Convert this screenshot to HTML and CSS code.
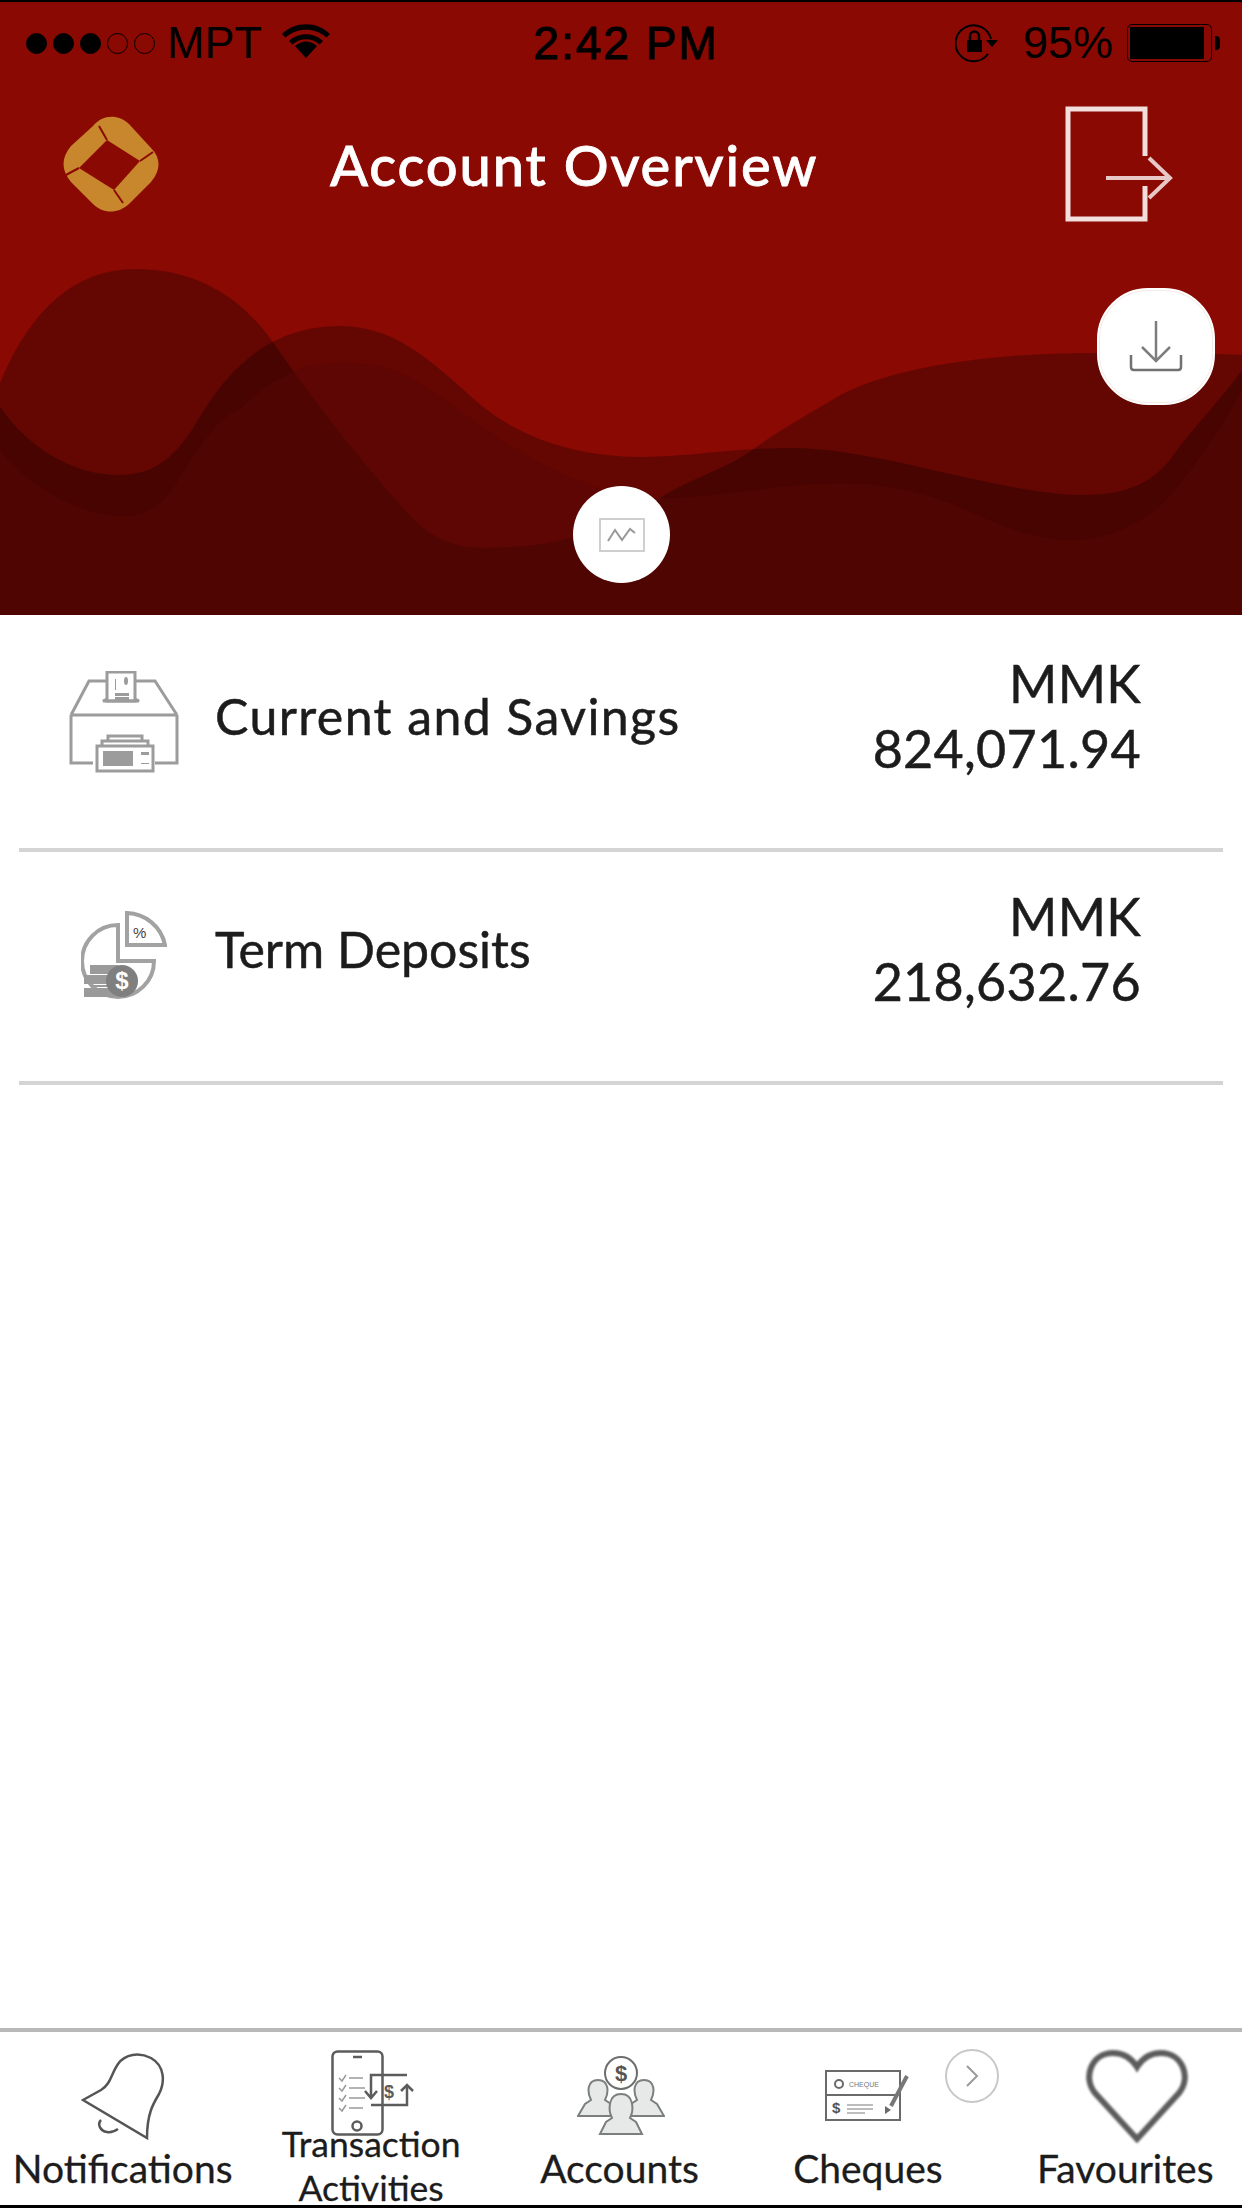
FILE: index.html
```html
<!DOCTYPE html>
<html lang="en">
<head>
  <meta charset="UTF-8" />
  <meta name="viewport" content="width=device-width, initial-scale=1.0"/>
  <title>Account Overview</title>
  <link rel="stylesheet" href="styles.css">
</head>
<body>
  <div class="screen">
    <header class="hero">
      <svg class="waves" width="1242" height="615" viewBox="0 0 1242 615">
        <path class="wave-a" d="M0 383C30 310 75 269 135 269C200 269 245 300 277 348C320 410 365 465 396 500C420 530 445 548 483 548C560 548 610 530 657 500C690 478 725 470 752 450C780 430 805 416 832 400C880 370 980 353 1093 353C1150 353 1200 353 1242 355V615H0Z"/>
        <path class="wave-b" d="M0 407C30 450 75 475 119 475C160 475 180 450 198 420C225 375 265 326 340 326C395 326 430 360 475 400C520 440 580 457 641 457C690 457 730 448 792 448C880 448 1000 495 1085 495C1130 495 1155 480 1172 457C1195 425 1225 395 1242 370V615H0Z"/>
        <path class="wave-c" d="M0 450C30 490 85 516 123 516C155 516 170 495 182 473C205 440 215 420 238 410C270 380 300 363 340 363C375 363 400 370 420 383C460 410 510 450 554 470C590 487 620 498 657 498C720 498 780 483 840 483C880 483 915 490 950 503C990 520 1030 540 1069 540C1110 540 1150 520 1172 493C1200 460 1225 420 1242 390V615H0Z"/>
      </svg>

      <div class="status-bar">
        <div class="status-left">
          <span class="signal">
            <i class="dot on"></i><i class="dot on"></i><i class="dot on"></i><i class="dot"></i><i class="dot"></i>
          </span>
          <span class="carrier">MPT</span>
          <svg class="wifi" width="48" height="34" viewBox="0 0 48 34">
            <path d="M24 34L13 22C20 16 28 16 35 22Z"/>
            <path d="M7 17C16 8 32 8 41 17L37.500 20.500C30 13.500 18 13.500 10.500 20.500Z"/>
            <path d="M0 10C13 -3 35 -3 48 10L44.500 13.500C33 3 15 3 3.500 13.500Z"/>
          </svg>
        </div>
        <div class="status-time">2:42 PM</div>
        <div class="status-right">
          <svg class="rotation" width="44" height="40" viewBox="0 0 44 40">
            <path d="M33 31A18 18 0 1 1 36 16" fill="none" stroke="#000" stroke-width="2"/>
            <path d="M31 17L43 17L37 24Z"/>
            <rect x="12" y="17" width="15" height="12" rx="1"/>
            <path d="M15 17V13A4.500 4.500 0 0 1 24 13V17" fill="none" stroke="#000" stroke-width="2.500"/>
          </svg>
          <span class="battery-pct">95%</span>
          <span class="battery"><span class="battery-fill"></span></span>
          <span class="battery-nub"></span>
        </div>
      </div>

      <nav class="nav-bar">
        <svg class="logo" width="96" height="96" viewBox="0 0 96 96">
          <path class="logo-body" d="M30 10C40 -2 55 -2 66 8L88 32C98 42 98 54 88 66L66 88C55 98 40 98 30 88L8 66C-2 54 -2 42 8 30Z"/>
          <path class="logo-hole" d="M44 24L77 45L51 74L16 52Z"/>
          <path class="logo-cut" d="M36 10L44 24M90 36L77 45M1 60L16 52M60 87L51 74"/>
        </svg>
        <h1 class="title">Account Overview</h1>
        <svg class="logout" width="110" height="116" viewBox="0 0 110 116">
          <path d="M80 50V3H3V113H80V80" fill="none" stroke="#f2dedd" stroke-width="5"/>
          <path d="M41 72H104M84 52L105 72L84 92" fill="none" stroke="#e8c8c6" stroke-width="4"/>
        </svg>
      </nav>

      <button class="float-btn download">
        <svg width="56" height="56" viewBox="0 0 56 56">
          <path d="M28 2V42M14 28L28 42L42 28" fill="none" stroke="#7d7d7d" stroke-width="2.500"/>
          <path d="M3 36V48C3 50 4 51 6 51H50C52 51 53 50 53 48V36" fill="none" stroke="#6f7173" stroke-width="2.500"/>
        </svg>
      </button>
      <button class="float-btn chart">
        <svg width="46" height="34" viewBox="0 0 46 34">
          <rect x="1" y="1" width="44" height="32" fill="none" stroke="#cfcfcf" stroke-width="2"/>
          <path d="M9 23L16 12L23 22L31 11L36 15" fill="none" stroke="#999" stroke-width="2"/>
        </svg>
      </button>
    </header>

    <main class="list">
      <div class="row row-first">
        <div class="row-icon">
          <svg width="110" height="102" viewBox="0 0 110 102">
            <g fill="none" stroke="#9c9c9c" stroke-width="3">
              <path d="M2 44L20 10H86L108 44"/>
              <path d="M2 44H108M2 44V92H24M108 44V92H86"/>
              <path d="M38 1H66V30H38Z" fill="#fff"/>
              <path d="M38 28L34 30H70L66 28" />
              <path d="M28 75H84V100H28Z" fill="#fff"/>
              <path d="M33 75V70H79V75M39 70V65H73V70"/>
            </g>
            <rect x="34" y="80" width="30" height="15" fill="#9c9c9c"/>
            <rect x="46" y="22" width="14" height="3" fill="#9c9c9c"/>
            <rect x="46" y="26" width="14" height="3" fill="#9c9c9c"/>
            <rect x="72" y="81" width="8" height="3" fill="#9c9c9c"/>
            <rect x="72" y="92" width="8" height="1" fill="#9c9c9c"/>
            <rect x="46" y="8" width="1" height="11" fill="#9c9c9c"/>
            <ellipse cx="57" cy="10" rx="2" ry="4" fill="#9c9c9c"/>
          </svg>
        </div>
        <div class="row-name wide">Current and Savings</div>
        <div class="row-amount">MMK<br>824,071.94</div>
      </div>
      <div class="row row-second">
        <div class="row-icon">
          <svg width="86" height="88" viewBox="0 0 86 88">
            <g fill="none" stroke="#a2a2a2" stroke-width="4">
              <path d="M37 14A36 36 0 1 0 73 50H37Z"/>
              <path d="M46 2A40 40 0 0 1 84 34H46Z"/>
            </g>
            <text class="pct" x="52" y="27">%</text>
            <g fill="#9a9a9a">
              <rect x="9" y="54" width="28" height="9"/>
              <rect x="3" y="64" width="28" height="9"/>
              <rect x="9" y="74" width="28" height="2"/>
              <rect x="3" y="77" width="32" height="9"/>
            </g>
            <circle cx="41" cy="70" r="16" fill="#7f7f7f"/>
            <text class="dollar" x="41" y="78">$</text>
          </svg>
        </div>
        <div class="row-name narrow">Term Deposits</div>
        <div class="row-amount">MMK<br>218,632.76</div>
      </div>
    </main>

    <footer class="tabs">
      <div class="tab">
        <div class="tab-icon">
          <svg width="86" height="88" viewBox="0 0 86 88">
            <g fill="none" stroke="#555" stroke-width="2.500">
              <path d="M2 48L20 38C30 32 30 22 37 12C44 2 58 0 70 6C84 14 84 30 78 42C72 52 66 62 66 86Z"/>
              <path d="M20 68C16 72 19 79 26 80C30 81 34 79 37 77"/>
            </g>
          </svg>
        </div>
        <div class="tab-label">Notifications</div>
      </div>
      <div class="tab tab-tall">
        <div class="tab-icon">
          <svg width="84" height="86" viewBox="0 0 84 86">
            <g fill="none" stroke="#5c5c5c" stroke-width="2.500">
              <rect x="1.500" y="1.500" width="50" height="83" rx="5"/>
              <path d="M76 25H40V48M34 41L40 48L46 41"/>
              <path d="M40 55H76V35M70 41L76 35L82 41"/>
              <circle cx="26" cy="76" r="4.500"/>
              <path d="M22 7H31"/>
            </g>
            <g fill="none" stroke="#9a9a9a" stroke-width="1.500">
              <path d="M8 28L11 31L15 25M18 28H32"/>
              <path d="M8 38L11 41L15 35M18 38H34"/>
              <path d="M8 48L11 51L15 45M18 48H34"/>
              <path d="M8 58L11 61L15 55M18 58H32"/>
            </g>
            <text class="tx-dollar" x="53" y="48">$</text>
          </svg>
        </div>
        <div class="tab-label">Transaction<br>Activities</div>
      </div>
      <div class="tab">
        <div class="tab-icon">
          <svg width="88" height="80" viewBox="0 0 88 80">
            <circle cx="44" cy="17" r="16" fill="#fff" stroke="#6d6d6d" stroke-width="2"/>
            <text class="acc-dollar" x="44" y="25">$</text>
            <g fill="#e6e9e8" stroke="#7b7f7e" stroke-width="2">
              <path d="M1 60L8 48L14 44C10 36 10 24 21 24C32 24 32 36 28 44L34 48L40 60Z"/>
              <path d="M47 60L54 48L60 44C56 36 56 24 67 24C78 24 78 36 74 44L80 48L87 60Z"/>
              <path d="M23 78L29 66L35 62C31 54 31 38 44 38C57 38 57 54 53 62L59 66L65 78Z"/>
            </g>
          </svg>
        </div>
        <div class="tab-label">Accounts</div>
      </div>
      <div class="tab">
        <div class="tab-icon">
          <svg width="88" height="52" viewBox="0 0 88 52">
            <g fill="none" stroke="#6a6a6a" stroke-width="2">
              <rect x="1" y="1" width="74" height="49"/>
              <path d="M1 25H72"/>
              <circle cx="14" cy="14" r="4"/>
            </g>
            <text class="cheque-word" x="24" y="17">CHEQUE</text>
            <text class="cheque-dollar" x="7" y="43">$</text>
            <path d="M22 35H48M22 39H48M22 43H40" stroke="#a8a8a8" stroke-width="1.500"/>
            <path d="M60 36V44L66 40Z" fill="#6a6a6a"/>
            <path d="M66 36L82 6" stroke="#777" stroke-width="4"/>
          </svg>
        </div>
        <div class="tab-label">Cheques</div>
        <div class="more-arrow">
          <svg width="14" height="24" viewBox="0 0 14 24">
            <path d="M2 2L12 12L2 22" fill="none" stroke="#9a9a9a" stroke-width="2"/>
          </svg>
        </div>
      </div>
      <div class="tab tab-fav">
        <div class="tab-icon">
          <svg class="heart" width="104" height="94" viewBox="0 0 104 94">
            <path d="M52 90L10 44C-3 28 7 4 28 4C39 4 47 10 52 18C57 10 65 4 76 4C97 4 107 28 94 44Z" fill="none" stroke="#5c5c5c" stroke-width="6"/>
          </svg>
        </div>
        <div class="tab-label">Favourites</div>
      </div>
    </footer>
  </div>
</body>
</html>
```

FILE: styles.css
```css
* {
  box-sizing: border-box;
}
body {
  margin: 0;
  background: #fff;
  font-family: 'Lato', 'Open Sans', sans-serif;
  color: #1c1c1c;
}
.screen {
  width: 1242px;
  height: 2208px;
  display: flex;
  flex-direction: column;
  overflow: hidden;
}

/* header */
.hero {
  position: relative;
  height: 615px;
  flex: none;
  background: #8b0903;
  border-top: 2px solid #000;
  overflow: hidden;
}
.waves {
  position: absolute;
  left: 0;
  top: -2px;
}
.wave-a, .wave-b {
  fill: #000;
  fill-opacity: 0.28;
}
.wave-c {
  fill: #550604;
  fill-opacity: 0.5;
}
.status-bar {
  position: relative;
  display: flex;
  align-items: center;
  height: 82px;
  padding: 0 22px 0 26px;
  font-family: 'Liberation Sans', Arial, sans-serif;
  font-size: 45px;
  color: #000;
}
.status-left, .status-right {
  flex: 1;
  display: flex;
  align-items: center;
}
.status-right {
  justify-content: flex-end;
}
.signal {
  display: flex;
  gap: 6px;
}
.dot {
  width: 21px;
  height: 21px;
  border-radius: 50%;
  border: 1.5px solid #000;
}
.dot.on {
  background: #000;
}
.carrier {
  margin-left: 12px;
}
.wifi {
  margin-left: 20px;
  margin-top: -4px;
}
.status-time {
  margin-left: 6px;
  font-size: 46px;
  letter-spacing: 2px;
  -webkit-text-stroke: 1px #000;
}
.battery-pct {
  margin-left: 24px;
}
.battery {
  display: block;
  margin-left: 14px;
  width: 85px;
  height: 38px;
  border: 1.5px solid #000;
  border-radius: 5px;
  padding: 2px;
}
.battery-fill {
  display: block;
  width: 94%;
  height: 100%;
  background: #000;
}
.battery-nub {
  width: 5px;
  height: 14px;
  margin-left: 3px;
  background: #000;
  border-radius: 0 4px 4px 0;
}
.nav-bar {
  position: relative;
  display: flex;
  align-items: center;
  height: 126px;
  margin-top: 17px;
  padding: 0 67px 0 63px;
}
.logo-body {
  fill: #c8872c;
}
.logo-hole {
  fill: #8b0903;
}
.logo-cut {
  stroke: #8b0903;
  stroke-width: 2;
}
.title {
  margin: 0 0 0 171px;
  font-size: 56px;
  font-weight: 500;
  color: #fff;
  letter-spacing: 1.9px;
  -webkit-text-stroke: 0.8px #fff;
}
.logout {
  margin-left: auto;
  filter: blur(0.7px);
}
.float-btn {
  position: absolute;
  display: flex;
  align-items: center;
  justify-content: center;
  padding: 0;
  background: #fff;
  border: none;
}
.download {
  left: 1098px;
  top: 287px;
  width: 116px;
  height: 115px;
  border-radius: 50px;
  border: 2px solid #f6ebe6;
  outline: 2px solid #fff;
  outline-offset: -1px;
}
.chart {
  left: 573px;
  top: 484px;
  width: 97px;
  height: 97px;
  border-radius: 50%;
}

/* account rows */
.list {
  flex: 1;
  margin: 0 19px;
}
.row {
  display: flex;
  align-items: center;
  padding: 0 82px 0 14px;
  border-bottom: 4px solid #d4d4d4;
}
.row-first {
  height: 237px;
  padding-bottom: 32px;
}
.row-second {
  height: 233px;
  padding-bottom: 36px;
}
.row-icon {
  width: 182px;
  display: flex;
  justify-content: center;
  padding-top: 12px;
}
.row-name {
  flex: 1;
  font-size: 50px;
  -webkit-text-stroke: 0.5px #1c1c1c;
}
.row-name.wide {
  letter-spacing: 1.4px;
}
.row-name.narrow {
  letter-spacing: 0;
}
.row-amount {
  font-size: 52px;
  line-height: 65px;
  text-align: right;
  letter-spacing: 0.3px;
  -webkit-text-stroke: 0.5px #1c1c1c;
}
.pct {
  font-family: 'Liberation Sans', sans-serif;
  font-size: 15px;
  fill: #444;
}
.dollar {
  font-family: 'Liberation Sans', sans-serif;
  font-size: 24px;
  font-weight: bold;
  fill: #fff;
  text-anchor: middle;
}

/* bottom tabs */
.tabs {
  display: grid;
  grid-template-columns: repeat(5, 1fr);
  flex: none;
  height: 180px;
  border-top: 4px solid #b8b8b8;
  border-bottom: 3px solid #000;
  overflow: hidden;
}
.tab {
  position: relative;
  display: flex;
  flex-direction: column;
  align-items: center;
}
.tab-icon {
  display: flex;
  justify-content: center;
  align-items: center;
  height: 114px;
  padding-top: 14px;
}
.tab-label {
  font-size: 39px;
  line-height: 44px;
  text-align: center;
  white-space: nowrap;
  color: #1c1c1c;
  margin-left: -3px;
  -webkit-text-stroke: 0.3px #1c1c1c;
}
.tab-tall .tab-icon {
  height: 108px;
  margin-bottom: -18px;
}
.tab-tall .tab-label {
  font-size: 35.5px;
  line-height: 44px;
}
.tab-fav {
  left: 9px;
}
.heart {
  margin-left: 20px;
  filter: blur(0.8px);
}
.tx-dollar {
  font-family: 'Liberation Sans', sans-serif;
  font-size: 18px;
  font-weight: bold;
  fill: #5c5c5c;
}
.acc-dollar {
  font-family: 'Liberation Sans', sans-serif;
  font-size: 22px;
  font-weight: bold;
  fill: #555;
  text-anchor: middle;
}
.cheque-word {
  font-family: 'Liberation Sans', sans-serif;
  font-size: 7px;
  fill: #777;
}
.cheque-dollar {
  font-family: 'Liberation Sans', sans-serif;
  font-size: 15px;
  font-weight: bold;
  fill: #555;
}
.more-arrow {
  position: absolute;
  left: 200px;
  top: 17px;
  width: 54px;
  height: 54px;
  border-radius: 50%;
  border: 2px solid #c8c8c8;
  background: #fff;
  display: flex;
  align-items: center;
  justify-content: center;
}
```
